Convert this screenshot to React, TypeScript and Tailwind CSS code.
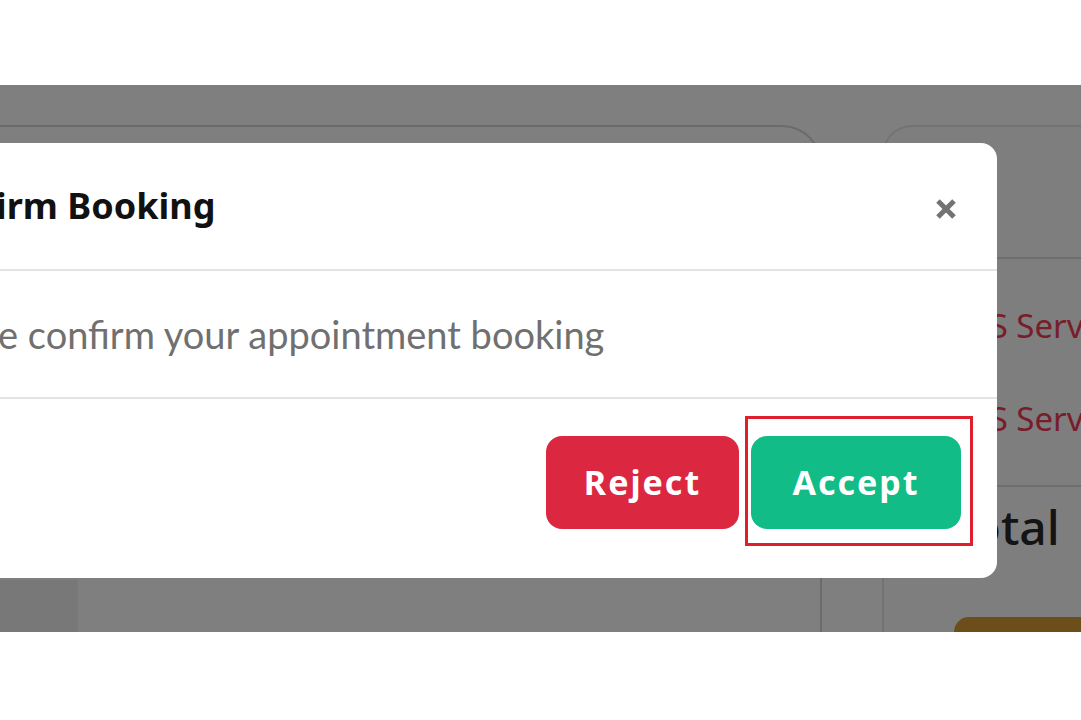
function CloseIcon() {
  return (
    <svg width="22" height="22" viewBox="0 0 22 22" fill="none">
      <path d="M3 3L19 19M19 3L3 19" stroke="#737373" strokeWidth="5" />
    </svg>
  )
}

export default function App() {
  return (
    <div className="relative h-[720px] w-[1081px] bg-white overflow-hidden">
      <div className="h-[85px]" />

      {/* screenshot panel */}
      <div className="relative h-[547px] overflow-hidden bg-white">
        {/* page behind the modal */}
        <div className="flex h-full pt-[40px]">
          <div className="flex w-[822px] shrink-0 flex-col justify-end rounded-tr-[40px] border-t-2 border-r-2 border-[#d6d6d6]">
            <div className="h-[52px] w-[78px] bg-[#f0f0f0]" />
          </div>
          <div className="ml-[60px] flex flex-1 flex-col rounded-tl-[30px] border-t-2 border-l-2 border-[#e6e6e6] bg-[#fcfcfc]">
            <div className="h-[132px] border-b-2 border-[#dcdcdc]" />
            <div className="flex h-[228px] flex-col justify-center gap-[60px] border-b-2 border-[#dcdcdc] pl-[70px] font-['Noto_Sans',sans-serif] text-[33px] text-[#f03a55]">
              <div className="leading-none whitespace-nowrap">HIS Services</div>
              <div className="leading-none whitespace-nowrap">HIS Services</div>
            </div>
            <div className="pl-[64px] pt-[16px] font-['Noto_Sans',sans-serif] text-[48px] font-medium leading-none text-[#282828]">
              Total
            </div>
            <div className="mt-auto ml-[70px] h-[15px] rounded-tl-[24px] bg-[#d69c34]" />
          </div>
        </div>

        {/* backdrop */}
        <div className="absolute inset-0 bg-black/50" />

        {/* modal */}
        <div className="absolute top-[58px] left-[-200px] right-[84px] rounded-[16px] bg-white">
          <div className="flex h-[128px] items-center justify-between border-b-2 border-[#e4e4e4] pl-[113px] pr-[38px]">
            <h2 className="font-['Noto_Sans',sans-serif] text-[36px] font-bold text-[#111]">Confirm Booking</h2>
            <button className="mt-[5px] flex h-[26px] w-[26px] items-center justify-center">
              <CloseIcon />
            </button>
          </div>
          <div className="flex h-[128px] items-center border-b-2 border-[#e4e4e4] pl-[111px]">
            <p className="font-['Lato',sans-serif] text-[38px] text-[#707070]">Please confirm your appointment booking</p>
          </div>
          <div className="flex h-[179px] items-start justify-end gap-[12px] pt-[37px] pr-[36px]">
            <button className="h-[93px] w-[193px] rounded-[16px] bg-[#dc2741] font-['Noto_Sans',sans-serif] text-[34px] font-bold tracking-[2px] text-white">
              Reject
            </button>
            <div className="relative">
              <button className="h-[93px] w-[210px] rounded-[16px] bg-[#12bc86] font-['Noto_Sans',sans-serif] text-[34px] font-bold tracking-[2px] text-white">
                Accept
              </button>
              <div className="pointer-events-none absolute -top-[20px] -bottom-[17px] -left-[6px] -right-[12px] border-[3px] border-[#df1f2b]" />
            </div>
          </div>
        </div>
      </div>
    </div>
  )
}
